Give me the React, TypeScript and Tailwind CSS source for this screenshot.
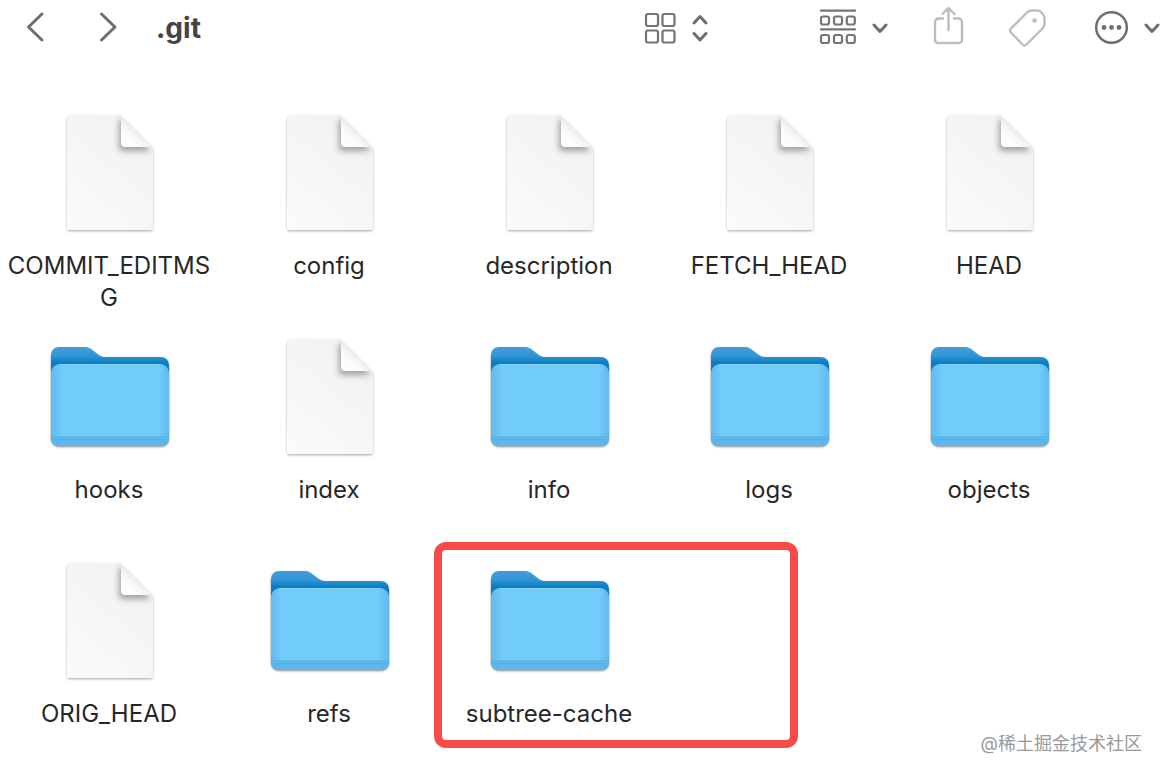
import { useState } from 'react';

type Kind = 'file' | 'folder';

interface Entry {
  name: string;
  kind: Kind;
  marked?: boolean;
}

const entries: Entry[] = [
  { name: 'COMMIT_EDITMSG', kind: 'file' },
  { name: 'config', kind: 'file' },
  { name: 'description', kind: 'file' },
  { name: 'FETCH_HEAD', kind: 'file' },
  { name: 'HEAD', kind: 'file' },
  { name: 'hooks', kind: 'folder' },
  { name: 'index', kind: 'file' },
  { name: 'info', kind: 'folder' },
  { name: 'logs', kind: 'folder' },
  { name: 'objects', kind: 'folder' },
  { name: 'ORIG_HEAD', kind: 'file' },
  { name: 'refs', kind: 'folder' },
  { name: 'subtree-cache', kind: 'folder', marked: true },
];

// Gradients and filters shared by all the file and folder icons
function IconDefs() {
  return (
    <svg width="0" height="0" className="absolute" aria-hidden="true">
      <defs>
        <linearGradient id="paper" x1="0" y1="1" x2="0.6" y2="0">
          <stop offset="0" stopColor="#fbfbfb" />
          <stop offset="1" stopColor="#f2f2f2" />
        </linearGradient>
        <linearGradient id="fold" x1="0.1" y1="0.9" x2="0.55" y2="0.4">
          <stop offset="0" stopColor="#ffffff" />
          <stop offset="0.5" stopColor="#fafafa" />
          <stop offset="1" stopColor="#e6e6e6" />
        </linearGradient>
        <linearGradient id="folderBack" x1="0" y1="0" x2="0" y2="1">
          <stop offset="0" stopColor="#419fd9" />
          <stop offset="0.09" stopColor="#3295d4" />
          <stop offset="0.16" stopColor="#0b7cc3" />
          <stop offset="1" stopColor="#0b7cc3" />
        </linearGradient>
        <linearGradient id="folderFront" x1="0" y1="0" x2="1" y2="0">
          <stop offset="0" stopColor="#62baee" />
          <stop offset="0.1" stopColor="#72ccfa" />
          <stop offset="0.9" stopColor="#72ccfa" />
          <stop offset="1" stopColor="#62baee" />
        </linearGradient>
        <filter id="iconShadow" x="-10%" y="-10%" width="120%" height="125%">
          <feDropShadow dx="0" dy="1" stdDeviation="1" floodColor="#000" floodOpacity="0.45" />
        </filter>
        <filter id="paperShadow" x="-10%" y="-10%" width="120%" height="125%">
          <feDropShadow dx="0" dy="1.2" stdDeviation="0.9" floodColor="#000" floodOpacity="0.32" />
        </filter>
        <filter id="foldBlur" x="-50%" y="-50%" width="200%" height="200%">
          <feGaussianBlur stdDeviation="3" />
        </filter>
        <clipPath id="paperClip">
          <path d="M25 5H74L107 38V117Q107 120 104 120H24Q21 120 21 117V9Q21 5 25 5Z" />
        </clipPath>
      </defs>
    </svg>
  );
}

function FileIcon() {
  return (
    <svg viewBox="0 0 128 128" className="size-32" aria-hidden="true">
      <path d="M25 5H74L107 38V117Q107 120 104 120H24Q21 120 21 117V9Q21 5 25 5Z" fill="url(#paper)" filter="url(#paperShadow)" />
      <g clipPath="url(#paperClip)">
        <path d="M73 10V38Q73 41 76 41H104L100 34L76 9Z" fill="#000" opacity="0.34" filter="url(#foldBlur)" />
      </g>
      <path d="M75 6V33Q75 37 79 37H106Z" fill="url(#fold)" />
    </svg>
  );
}

function FolderIcon() {
  return (
    <svg viewBox="0 0 128 128" className="size-32" aria-hidden="true">
      <g filter="url(#iconShadow)">
        <path
          d="M14 13H38C43 13 45 15 49 18C53 21.500 55 23 60 23H114Q123 23 123 32V103Q123 112 114 112H14Q5 112 5 103V22Q5 13 14 13Z"
          fill="url(#folderBack)"
        />
        <rect x="5" y="30" width="118" height="82" rx="9" fill="url(#folderFront)" />
      </g>
      <path d="M5 103H123Q123 112 114 112H14Q5 112 5 103Z" fill="#5cb7ee" />
      <path d="M5 102.500H123M5 105.500H123" stroke="#4fabe2" strokeWidth="1" opacity="0.5" />
      <path d="M13 30.500H115" stroke="#84d4fb" strokeWidth="1" />
    </svg>
  );
}

function Chevron() {
  return (
    <svg width="16" height="36" viewBox="0 0 16 36" fill="none" stroke="#6e6e6e" strokeWidth="3" strokeLinecap="round" strokeLinejoin="round" aria-hidden="true">
      <path d="M2 15L8 21.500L14 15" />
    </svg>
  );
}

function Toolbar() {
  return (
    <header className="flex h-14 items-center pr-1 pl-6">
      <nav className="flex items-center gap-12">
        <button type="button" aria-label="Back">
          <svg width="24" height="36" viewBox="0 0 24 36" fill="none" stroke="#6e6e6e" strokeWidth="3" strokeLinecap="round" strokeLinejoin="round">
            <path d="M18 4L4.500 17L18 30" />
          </svg>
        </button>
        <button type="button" aria-label="Forward">
          <svg width="24" height="36" viewBox="0 0 24 36" fill="none" stroke="#6e6e6e" strokeWidth="3" strokeLinecap="round" strokeLinejoin="round">
            <path d="M5.500 4L19 17L5.500 30" />
          </svg>
        </button>
      </nav>
      <h1 className="ml-9 text-[28px] leading-9 font-bold text-[#444444]">.git</h1>

      <div className="ml-auto flex items-center gap-10">
        <div className="flex items-center gap-[110px]">
          <button type="button" aria-label="View" className="flex items-center gap-4">
            <svg width="32" height="36" viewBox="0 0 32 36" fill="none" stroke="#757575" strokeWidth="2.200">
              <rect x="2" y="4" width="12" height="12" rx="2" />
              <rect x="18.500" y="4" width="12" height="12" rx="2" />
              <rect x="2" y="20.500" width="12" height="12" rx="2" />
              <rect x="18.500" y="20.500" width="12" height="12" rx="2" />
            </svg>
            <svg width="16" height="36" viewBox="0 0 16 36" fill="none" stroke="#6e6e6e" strokeWidth="3" strokeLinecap="round" strokeLinejoin="round">
              <path d="M2 13L8 6.500L14 13M2 23.500L8 30L14 23.500" />
            </svg>
          </button>
          <button type="button" aria-label="Group" className="flex items-center gap-4">
            <svg width="38" height="36" viewBox="0 0 38 36" fill="none" stroke="#757575" strokeWidth="2.200" className="overflow-visible">
              <path d="M3 0.700H37M3 19.400H37" strokeLinecap="round" />
              <rect x="3" y="6.500" width="8" height="8" rx="2" />
              <rect x="16" y="6.500" width="8" height="8" rx="2" />
              <rect x="28.800" y="6.500" width="8" height="8" rx="2" />
              <rect x="3" y="25" width="8" height="8" rx="2" />
              <rect x="16" y="25" width="8" height="8" rx="2" />
              <rect x="28.800" y="25" width="8" height="8" rx="2" />
            </svg>
            <Chevron />
          </button>
        </div>
        <button type="button" aria-label="Share">
          <svg width="40" height="44" viewBox="0 0 40 44" fill="none" stroke="#bdbdbd" strokeWidth="2.400" strokeLinecap="round" strokeLinejoin="round">
            <path d="M15 12.500H11Q7 12.500 7 16.500V33.500Q7 37 11 37H30Q34 37 34 33.500V16.500Q34 12.500 30 12.500H26M20.500 24V2.500M14.500 8L20.500 2L26.500 8" />
          </svg>
        </button>
        <button type="button" aria-label="Tags">
          <svg width="46" height="44" viewBox="0 0 46 44" fill="none" stroke="#bdbdbd" strokeWidth="2.400" strokeLinecap="round" strokeLinejoin="round">
            <path d="M19 6.500Q21 4.500 23.500 4.500H29.500Q31.500 4.500 33 6L35 8.500Q36.500 10 36.500 12.500V18Q36.500 20.500 34.500 22.500L18.500 38.500Q16.500 40.500 14.500 38.500L3 26.500Q1 24.500 3 22.500Z" />
            <circle cx="26.500" cy="14.500" r="2.200" fill="#bdbdbd" stroke="none" />
          </svg>
        </button>
        <button type="button" aria-label="More" className="flex items-center gap-4">
          <svg width="34" height="36" viewBox="0 0 34 36" fill="none" stroke="#6e6e6e" strokeWidth="2.500">
            <circle cx="17.500" cy="17.500" r="15.300" />
            <g fill="#6e6e6e" stroke="none">
              <circle cx="10" cy="17.500" r="2.400" />
              <circle cx="17.500" cy="17.500" r="2.400" />
              <circle cx="25" cy="17.500" r="2.400" />
            </g>
          </svg>
          <Chevron />
        </button>
      </div>
    </header>
  );
}

export default function App() {
  const [selected, setSelected] = useState<string | null>(null);

  return (
    <div className="relative min-h-screen bg-white font-['Inter','Noto_Sans_CJK_SC',sans-serif] text-[#272727]">
      <IconDefs />
      <Toolbar />

      <main className="pt-[54px]">
        <ul className="grid grid-cols-[repeat(auto-fill,220px)] gap-y-5">
          {entries.map((entry) => (
            <li key={entry.name} className="relative">
              <button
                type="button"
                aria-pressed={selected === entry.name}
                onClick={() => setSelected(entry.name)}
                className="flex min-h-51 w-full flex-col items-center gap-3"
              >
                {entry.kind === 'file' ? <FileIcon /> : <FolderIcon />}
                <span className="w-full pr-2 pl-1.5 text-center text-2xl leading-8 break-all">{entry.name}</span>
              </button>
              {entry.marked && (
                <div className="pointer-events-none absolute -top-4 -left-1.5 h-[206px] w-[364px] rounded-xl border-8 border-[#f64b47]" />
              )}
            </li>
          ))}
        </ul>
      </main>

      <p className="absolute right-[22px] bottom-5 text-lg leading-6 text-[#999999]">@稀土掘金技术社区</p>
    </div>
  );
}
